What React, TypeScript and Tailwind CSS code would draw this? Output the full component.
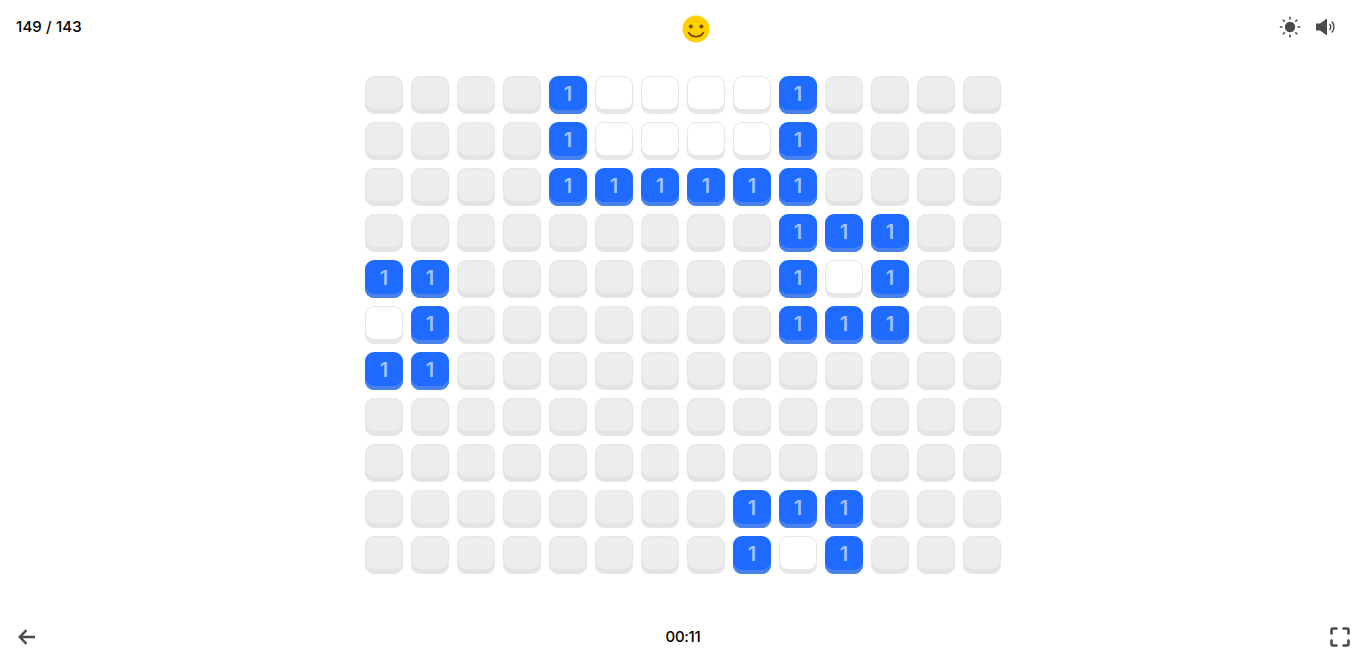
import React from 'react';

// . empty, b blue 1, w opened white
const board = [
  '....bwwwwb....',
  '....bwwwwb....',
  '....bbbbbb....',
  '.........bbb..',
  'bb.......bwb..',
  'wb.......bbb..',
  'bb............',
  '..............',
  '..............',
  '........bbb...',
  '........bwb...',
];

const Cell = ({ kind }: { kind: string }) => {
  if (kind === 'b') {
    return (
      <div className="flex h-[38px] w-[38px] items-center justify-center rounded-[9px] bg-[#1f6bff] pb-[3px] text-[20px] font-semibold text-[#a3c3ff] shadow-[inset_0_-4px_0_#4a82ec]">
        1
      </div>
    );
  }
  if (kind === 'w') {
    return (
      <div className="h-[38px] w-[38px] rounded-[9px] border border-[#e6e6e6] bg-white shadow-[inset_0_-4px_0_#e6e6e6]" />
    );
  }
  return (
    <div className="h-[38px] w-[38px] rounded-[9px] border border-[#e6e6e6] bg-[#ededed] shadow-[inset_0_-4px_0_#e3e3e3]" />
  );
};

const Smiley = () => (
  <svg width="28" height="28" viewBox="0 0 28 28">
    <circle cx="14" cy="14" r="13.5" fill="#ffd000" />
    <circle cx="8.8" cy="11.5" r="2" fill="#7a4a00" />
    <circle cx="19.4" cy="11.5" r="2" fill="#7a4a00" />
    <path d="M6.8 17.8 C9.5 22.8 18.5 22.8 21.2 17.8" fill="none" stroke="#7a4a00" strokeWidth="1.8" strokeLinecap="round" />
  </svg>
);

const Sun = () => (
  <svg width="22" height="22" viewBox="0 0 22 22" fill="#4a4a4a">
    <circle cx="11" cy="11" r="5.2" />
    <g stroke="#4a4a4a" strokeWidth="1.6">
      <path d="M11 0.8V3.6M11 18.4V21.2M0.8 11H3.6M18.4 11H21.2M3.8 3.8L5.7 5.7M16.3 16.3L18.2 18.2M18.2 3.8L16.3 5.7M5.7 16.3L3.8 18.2" />
    </g>
  </svg>
);

const Speaker = () => (
  <svg width="20" height="18" viewBox="0 0 20 18">
    <path d="M0 5.5H4L11 0.5V17.5L4 12.5H0Z" fill="#4a4a4a" />
    <path d="M13.5 6C15 7.8 15 10.2 13.5 12M15.8 3.5C18.6 6.6 18.6 11.4 15.8 14.5" fill="none" stroke="#4a4a4a" strokeWidth="1.4" />
  </svg>
);

const ArrowBack = () => (
  <svg width="18" height="16" viewBox="0 0 18 16" fill="none" stroke="#4a4a4a" strokeWidth="2.4">
    <path d="M17 8H2.5M8.5 1.2L1.8 8L8.5 14.8" />
  </svg>
);

const Fullscreen = () => (
  <svg width="20" height="20" viewBox="0 0 20 20" fill="none" stroke="#4a4a4a" strokeWidth="2.6" strokeLinecap="round">
    <path d="M1.5 6.5V3C1.5 2 2 1.5 3 1.5H6.5M13.5 1.5H17C18 1.5 18.5 2 18.5 3V6.5M18.5 13.5V17C18.5 18 18 18.5 17 18.5H13.5M6.5 18.5H3C2 18.5 1.5 18 1.5 17V13.5" />
  </svg>
);

export default function App() {
  return (
    <div className="flex h-[657px] flex-col bg-white font-['Inter','Liberation_Sans',sans-serif] text-black">
      <header className="grid h-[76px] grid-cols-3 px-4 pt-[15px]">
        <div className="text-[15px] leading-[23px] font-medium tracking-[0.01em]">149 / 143</div>
        <div className="flex justify-center pl-[26px]">
          <Smiley />
        </div>
        <div className="flex h-6 items-center justify-end gap-[15px] pr-[14px]">
          <Sun />
          <Speaker />
        </div>
      </header>

      <main className="flex flex-col items-center gap-2">
        {board.map((row, r) => (
          <div key={r} className="flex gap-2">
            {row.split('').map((kind, c) => (
              <Cell key={c} kind={kind} />
            ))}
          </div>
        ))}
      </main>

      <footer className="mt-auto flex h-[40px] items-center justify-between pl-[18px] pr-4">
        <ArrowBack />
        <div className="text-[15px] leading-[22px] font-medium tracking-[-0.02em]">00:11</div>
        <Fullscreen />
      </footer>
    </div>
  );
}
